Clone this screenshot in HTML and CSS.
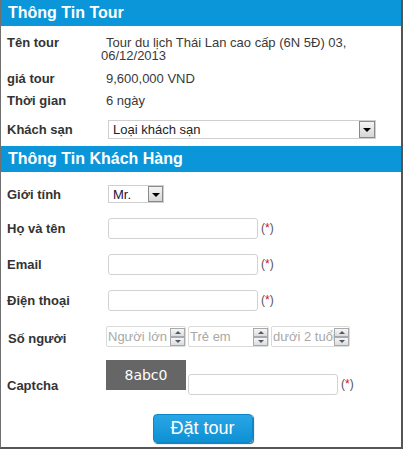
FILE: index.html
```html
<!DOCTYPE html>
<html lang="vi">
<head>
<meta charset="utf-8">
<title>Đặt tour</title>
<link rel="stylesheet" href="styles.css">
</head>
<body>
<div class="panel">
  <div class="section-title">Thông Tin Tour</div>
  <div class="section tour-info">
    <div class="row row-name">
      <span class="label">Tên tour</span>
      <span class="value name-value">Tour du lịch Thái Lan cao cấp (6N 5Đ) 03, 06/12/2013</span>
    </div>
    <div class="row row-price">
      <span class="label">giá tour</span>
      <span class="value">9,600,000 VND</span>
    </div>
    <div class="row row-duration">
      <span class="label">Thời gian</span>
      <span class="value">6 ngày</span>
    </div>
    <div class="row row-hotel">
      <span class="label">Khách sạn</span>
      <div class="select select-hotel">
        <span class="select-text">Loại khách sạn</span>
        <span class="select-arrow"><span class="tri-down"></span></span>
      </div>
    </div>
  </div>

  <div class="section-title">Thông Tin Khách Hàng</div>
  <div class="section guest-info">
    <div class="row row-gender">
      <span class="label">Giới tính</span>
      <div class="select select-gender">
        <span class="select-text dark">Mr.</span>
        <span class="select-arrow small"><span class="tri-down"></span></span>
      </div>
    </div>
    <div class="row row-field first-field">
      <span class="label">Họ và tên</span>
      <input class="text-input" type="text">
      <span class="required">(<span class="star">*</span>)</span>
    </div>
    <div class="row row-field">
      <span class="label">Email</span>
      <input class="text-input" type="text">
      <span class="required">(<span class="star">*</span>)</span>
    </div>
    <div class="row row-field">
      <span class="label">Điện thoại</span>
      <input class="text-input" type="text">
      <span class="required">(<span class="star">*</span>)</span>
    </div>
    <div class="row row-field row-people">
      <span class="label label-people">Số người</span>
      <div class="spin spin-adult">
        <input class="spin-input" type="text" placeholder="Người lớn">
        <span class="spin-buttons">
          <span class="spin-btn"><span class="tri-up"></span></span>
          <span class="spin-btn"><span class="tri-dn"></span></span>
        </span>
      </div>
      <div class="spin spin-child">
        <input class="spin-input" type="text" placeholder="Trẻ em">
        <span class="spin-buttons">
          <span class="spin-btn"><span class="tri-up"></span></span>
          <span class="spin-btn"><span class="tri-dn"></span></span>
        </span>
      </div>
      <div class="spin spin-baby">
        <input class="spin-input" type="text" placeholder="dưới 2 tuổi">
        <span class="spin-buttons">
          <span class="spin-btn"><span class="tri-up"></span></span>
          <span class="spin-btn"><span class="tri-dn"></span></span>
        </span>
      </div>
    </div>
    <div class="row row-captcha">
      <span class="label label-captcha">Captcha</span>
      <div class="captcha-img">8abc0</div>
      <input class="text-input captcha-input" type="text">
      <span class="required captcha-req">(<span class="star">*</span>)</span>
    </div>
    <div class="row row-submit">
      <button class="submit-btn" type="button">Đặt tour</button>
    </div>
  </div>
</div>
</body>
</html>
```

FILE: styles.css
```css
html, body {
  margin: 0;
  padding: 0;
}
body {
  font-family: "Liberation Sans", Arial, sans-serif;
  background: #3b3b3b;
}
.panel {
  width: 403px;
  height: 449px;
  box-sizing: border-box;
  background: #fff;
  border-left: 1px solid #707070;
  border-right: 2px solid #555;
  border-bottom: 2px solid #555;
  overflow: hidden;
}
.section-title {
  height: 26px;
  line-height: 26px;
  padding-left: 7px;
  background: #0a96d9;
  color: #fff;
  font-weight: bold;
  font-size: 16px;
}
.section {
  display: flex;
  flex-direction: column;
}
.tour-info {
  padding: 10px 0 7px;
}
.row {
  display: flex;
  align-items: center;
}
.label {
  box-sizing: border-box;
  width: 100px;
  flex-shrink: 0;
  padding-left: 6px;
  font-size: 13px;
  line-height: 15px;
  font-weight: bold;
  color: #333;
}
.value {
  font-size: 13px;
  line-height: 15px;
  color: #3a3a3a;
  text-indent: 5px;
  padding-right: 40px;
}
.row-name {
  height: 26px;
  align-items: flex-start;
}
.row-name .label {
  line-height: 13px;
}
.row-name .value {
  line-height: 13px;
}
.row-price {
  margin-top: 5px;
  height: 22px;
}
.row-duration {
  height: 22px;
}
.row-hotel {
  margin-top: 9px;
  height: 19px;
}

/* fake select */
.select {
  box-sizing: border-box;
  display: flex;
  align-items: center;
  border: 1px solid #cfcfcf;
  background: #fff;
  margin-left: 7px;
}
.select-hotel {
  width: 268px;
  height: 19px;
}
.select-gender {
  width: 56px;
  height: 18px;
}
.select-text {
  flex: 1;
  padding-left: 4px;
  font-size: 13px;
  line-height: 15px;
  color: #222;
  white-space: nowrap;
}
.select-text.dark {
  color: #1b1340;
}
.select-arrow {
  box-sizing: border-box;
  width: 16px;
  height: 17px;
  border: 1px solid #8a8a8a;
  background: linear-gradient(#f4f4f4, #d6d6d6);
  display: flex;
  align-items: center;
  justify-content: center;
}
.select-arrow.small {
  width: 15px;
  height: 16px;
}
.tri-down {
  width: 0;
  height: 0;
  border-left: 4px solid transparent;
  border-right: 4px solid transparent;
  border-top: 4px solid #000;
  margin-top: 1px;
}

/* guest info */
.row-gender {
  margin-top: 13px;
  height: 18px;
}
.row-field {
  margin-top: 15px;
  height: 21px;
}
.text-input {
  box-sizing: border-box;
  width: 150px;
  height: 21px;
  margin: 0 0 0 7px;
  border: 1px solid #d2d2d2;
  border-radius: 3px;
  background: #fff;
  padding: 0 3px;
  font: 13px "Liberation Sans", Arial, sans-serif;
  outline: none;
}
.required {
  margin-left: 3px;
  font-size: 12px;
  line-height: 15px;
  color: #555;
}
.star {
  color: #d0102a;
}
.label-people {
  padding-left: 7px;
  padding-top: 3px;
}
.spin {
  box-sizing: border-box;
  display: flex;
  align-items: center;
  height: 21px;
  border: 1px solid #dadada;
  border-radius: 2px;
  background: #fff;
}
.spin-adult {
  width: 80px;
  margin-left: 5px;
}
.spin-child {
  width: 81px;
  margin-left: 2px;
}
.spin-baby {
  width: 79px;
  margin-left: 2px;
}
.spin-input {
  flex: 1;
  min-width: 0;
  height: 19px;
  border: none;
  padding: 0 0 0 1px;
  margin: 0;
  font: 13px "Liberation Sans", Arial, sans-serif;
  background: transparent;
  outline: none;
}
.spin-input::placeholder {
  color: #a8a8a8;
  opacity: 1;
}
.spin-buttons {
  display: flex;
  flex-direction: column;
  width: 15px;
  height: 19px;
  justify-content: center;
}
.spin-btn {
  box-sizing: border-box;
  height: 9px;
  border: 1px solid #a9a9a9;
  background: linear-gradient(#f6f6f6, #dcdcdc);
  display: flex;
  align-items: center;
  justify-content: center;
}
.tri-up {
  width: 0;
  height: 0;
  border-left: 3px solid transparent;
  border-right: 3px solid transparent;
  border-bottom: 3px solid #4a5a70;
}
.tri-dn {
  width: 0;
  height: 0;
  border-left: 3px solid transparent;
  border-right: 3px solid transparent;
  border-top: 3px solid #4a5a70;
}
.row-captcha {
  margin-top: 13px;
  height: 35px;
  align-items: flex-end;
}
.label-captcha {
  margin-bottom: 2px;
}
.captcha-img {
  align-self: flex-start;
  width: 80px;
  height: 30px;
  margin-left: 5px;
  background: #666;
  color: #fff;
  font: 14px "DejaVu Sans", Verdana, sans-serif;
  line-height: 30px;
  text-align: center;
}
.captcha-input {
  margin-left: 2px;
}
.captcha-req {
  margin-bottom: 3px;
}
.row-submit {
  margin-top: 19px;
  height: 29px;
  justify-content: center;
  padding-left: 3px;
}
.submit-btn {
  box-sizing: border-box;
  width: 100px;
  height: 29px;
  border: 1px solid #0c86c6;
  border-radius: 4px;
  background: linear-gradient(#2aa6e6, #0e90d4);
  box-shadow: 1px 1px 1px rgba(0, 0, 0, 0.65);
  color: #fff;
  font: 18px "Liberation Sans", Arial, sans-serif;
  line-height: 25px;
  padding: 0;
  cursor: pointer;
}
```
